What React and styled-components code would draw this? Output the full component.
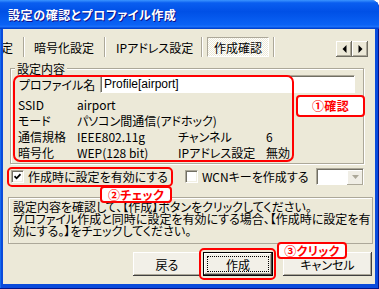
import React from "react";
import styled, { createGlobalStyle } from "styled-components";

const RED = "#FF0000";
const FACE = "#ECE9D8";

const GlobalStyle = createGlobalStyle`
  html, body { margin: 0; padding: 0; background: #ffffff; }
  body {
    font-family: "Noto Sans CJK JP", "Liberation Sans", sans-serif;
    font-size: 12px;
    color: #000;
    font-feature-settings: "palt";
  }
  *, *::before, *::after { box-sizing: border-box; }
`;

const Window = styled.div`
  width: 379px;
  height: 289px;
  display: flex;
  flex-direction: column;
  overflow: hidden;
  border-top-right-radius: 8px;
  background: #0A4BDB;
  box-shadow: inset -1px -1px #00138c, inset 1px 0 #166aee;
`;

const TitleBar = styled.div`
  height: 29px;
  flex: none;
  display: flex;
  align-items: center;
  padding-left: 8px;
  background: linear-gradient(180deg, #3b95ff 0%, #0a5ef0 10%, #0050e6 40%, #0a62f5 85%, #1a6ffa 92%, #0046d6 97%, #003dc8 100%);
  color: #fff;
  font-weight: 700;
  font-size: 12px;
  letter-spacing: 0.6px;
  text-shadow: 1px 1px #0f1089;
  white-space: nowrap;
`;

const Client = styled.div`
  position: relative;
  flex: 1;
  margin: 0 4px 5px 3px;
  background: ${FACE};
  display: flex;
  flex-direction: column;
`;

/* ---------- toolbar of pages ---------- */
const Toolbar = styled.div`
  display: flex;
  align-items: stretch;
  height: 20px;
  margin: 8px 7px 0 0;
  white-space: nowrap;
`;

const CutLabel = styled.span`
  width: 10px;
  overflow: hidden;
  display: flex;
  justify-content: flex-end;
  align-items: center;
`;

const Separator = styled.span`
  width: 2px;
  flex: none;
  border-left: 1px solid #aca899;
  border-right: 1px solid #fff;
  margin-left: ${(p) => p.$ml || 0}px;
`;

const Tab = styled.span`
  display: flex;
  align-items: center;
  width: ${(p) => p.$w}px;
  padding-left: ${(p) => p.$pl}px;
`;

const ActiveTab = styled.span`
  display: flex;
  align-items: center;
  margin: 0 4px 0 4px;
  padding: 0 6px;
  border: 1px solid;
  border-color: #aca899 #fff #fff #aca899;
  background: repeating-conic-gradient(#ffffff 0% 25%, ${FACE} 0% 50%) 0 0 / 2px 2px;
`;

const ScrollButtons = styled.div`
  margin-left: auto;
  display: flex;
  align-self: flex-end;
`;

const ScrollButton = styled.span`
  width: 16px;
  height: 16px;
  display: flex;
  align-items: center;
  justify-content: center;
  background: ${FACE};
  box-shadow: inset -1px -1px #716f64, inset 1px 1px #fff, inset -2px -2px #aca899;
`;

/* ---------- group box ---------- */
const Group = styled.fieldset`
  margin: 5px 0 0 7px;
  width: 354px;
  padding: 0 5px 2px 5px;
  border: 1px solid #aca899;
  box-shadow: inset 1px 1px #fff, 1px 1px #fff;
  min-width: 0;
`;

const Legend = styled.legend`
  padding: 0 2px;
  margin-left: -1px;
  line-height: 13px;
  background: ${FACE};
`;

const ProfileRow = styled.div`
  display: flex;
  align-items: center;
  height: 18px;
`;

const ProfileLabel = styled.span`
  width: 84px;
  padding-left: 3px;
  white-space: nowrap;
`;

const TextField = styled.div`
  width: 255px;
  height: 18px;
  display: flex;
  align-items: center;
  padding-left: 3px;
  background: #fff;
  border: 1px solid;
  border-color: #aca899 #fff #fff #aca899;
  box-shadow: inset 1px 1px #716f64;
  font-family: "Liberation Sans", "Noto Sans CJK JP", sans-serif;
`;

const InfoGrid = styled.div`
  display: grid;
  grid-template-columns: 59px 101px 88px auto;
  grid-template-rows: 16px 16px 16px 16px;
  align-items: center;
  margin-top: 4px;
  padding-left: 2px;
  line-height: 14px;
  white-space: nowrap;
`;

const Value = styled.span`
  grid-column: ${(p) => (p.$span ? "2 / span 3" : "auto")};
`;

/* ---------- check row ---------- */
const CheckRow = styled.div`
  display: flex;
  align-items: center;
  height: 20px;
  margin-top: 2px;
  padding-left: 8px;
  white-space: nowrap;
`;

const CheckItem = styled.label`
  display: flex;
  align-items: center;
  gap: 4px;
  margin-left: ${(p) => p.$ml || 0}px;
`;

const CheckBox = styled.span`
  width: 13px;
  height: 13px;
  flex: none;
  background: #fff;
  border: 1px solid;
  border-color: #aca899 #fff #fff #aca899;
  box-shadow: inset 1px 1px #716f64, inset -1px -1px #f1efe2;
  display: flex;
  align-items: center;
  justify-content: center;
`;

const Combo = styled.div`
  margin-left: 8px;
  width: 48px;
  height: 17px;
  display: flex;
  justify-content: flex-end;
  background: #fff;
  border: 1px solid;
  border-color: #aca899 #fff #fff #aca899;
  box-shadow: inset 1px 1px #716f64;
  padding: 1px 0 0 1px;
`;

const ComboButton = styled.span`
  width: 16px;
  height: 15px;
  display: flex;
  align-items: center;
  justify-content: center;
  background: #f0eee6;
  box-shadow: inset -1px -1px #aca899, inset 1px 1px #fff;
`;

/* ---------- description ---------- */
const Description = styled.p`
  margin: 11px 0 0 5px;
  width: 365px;
  height: 47px;
  padding: 3px 4px 0 4px;
  border: 1px solid #aca899;
  box-shadow: inset 1px 1px #fff;
  line-height: 12px;
  white-space: nowrap;
  overflow: hidden;
`;

/* ---------- buttons ---------- */
const ButtonRow = styled.div`
  display: flex;
  align-items: center;
  justify-content: flex-end;
  margin-top: 8px;
  padding-right: 3px;
  height: 24px;
`;

const Button = styled.button`
  font: inherit;
  width: ${(p) => p.$w}px;
  height: 24px;
  margin-left: ${(p) => p.$ml || 0}px;
  padding: 3px;
  color: #000;
  background: #f2f0e8;
  border: ${(p) => (p.$default ? "1px solid #000" : "none")};
  box-shadow: inset -1px -1px #404040, inset 1px 1px #fff, inset -2px -2px #aca899;
  display: flex;
`;

const FocusRing = styled.span`
  flex: 1;
  display: flex;
  align-items: center;
  justify-content: center;
  border: ${(p) => (p.$on ? "1px dotted #000" : "1px solid transparent")};
`;

/* ---------- annotations ---------- */
const Highlight = styled.div`
  position: absolute;
  left: ${(p) => p.$x}px;
  top: ${(p) => p.$y}px;
  width: ${(p) => p.$w}px;
  height: ${(p) => p.$h}px;
  border: 2px solid ${RED};
  border-radius: ${(p) => p.$r || 7}px;
  pointer-events: none;
`;

const Callout = styled.div`
  position: absolute;
  left: ${(p) => p.$x}px;
  top: ${(p) => p.$y}px;
  width: ${(p) => p.$w}px;
  height: ${(p) => p.$h}px;
  border: 2px solid ${RED};
  border-radius: 4px;
  background: #fff;
  color: ${RED};
  font-weight: 700;
  font-size: 12px;
  line-height: 12px;
  display: flex;
  align-items: center;
  justify-content: center;
  white-space: nowrap;
  letter-spacing: 0.3px;
`;

const Check = () => (
  <svg width="7" height="7" viewBox="0 0 7 7">
    <path d="M0.5 3.2 L2.6 5.3 L6.5 1.2" fill="none" stroke="#000" strokeWidth="1.8" />
  </svg>
);

const Triangle = ({ dir, color = "#000" }) => (
  <svg width="5" height="8" viewBox="0 0 5 8">
    {dir === "left" ? (
      <path d="M4.5 0 L0.5 4 L4.5 8 Z" fill={color} />
    ) : (
      <path d="M0.5 0 L4.5 4 L0.5 8 Z" fill={color} />
    )}
  </svg>
);

const DownArrow = () => (
  <svg width="7" height="4" viewBox="0 0 7 4">
    <path d="M0 0 L7 0 L3.5 4 Z" fill="#aca899" />
  </svg>
);

export default function App() {
  return (
    <>
      <GlobalStyle />
      <Window>
        <TitleBar>設定の確認とプロファイル作成</TitleBar>
        <Client>
          <Toolbar>
            <CutLabel>定</CutLabel>
            <Separator $ml={10} />
            <Tab $w={79} $pl={9}>暗号化設定</Tab>
            <Separator />
            <Tab $w={95} $pl={10}>IPアドレス設定</Tab>
            <Separator />
            <ActiveTab>作成確認</ActiveTab>
            <Separator />
            <ScrollButtons>
              <ScrollButton><Triangle dir="left" /></ScrollButton>
              <ScrollButton><Triangle dir="right" /></ScrollButton>
            </ScrollButtons>
          </Toolbar>

          <Group>
            <Legend>設定内容</Legend>
            <ProfileRow>
              <ProfileLabel>プロファイル名</ProfileLabel>
              <TextField>Profile[airport]</TextField>
            </ProfileRow>
            <InfoGrid>
              <span>SSID</span>
              <Value $span>airport</Value>
              <span>モード</span>
              <Value $span>パソコン間通信(アドホック)</Value>
              <span>通信規格</span>
              <Value>IEEE802.11g</Value>
              <span>チャンネル</span>
              <Value>6</Value>
              <span>暗号化</span>
              <Value>WEP(128 bit)</Value>
              <span>IPアドレス設定</span>
              <Value>無効</Value>
            </InfoGrid>
          </Group>

          <CheckRow>
            <CheckItem>
              <CheckBox><Check /></CheckBox>
              作成時に設定を有効にする
            </CheckItem>
            <CheckItem $ml={17}>
              <CheckBox />
              WCNキーを作成する
            </CheckItem>
            <Combo>
              <ComboButton><DownArrow /></ComboButton>
            </Combo>
          </CheckRow>

          <Description>
            設定内容を確認して、【作成】ボタンをクリックしてください。
            <br />
            プロファイル作成と同時に設定を有効にする場合、【作成時に設定を有
            <br />
            効にする。】をチェックしてください。
          </Description>

          <ButtonRow>
            <Button $w={68}><FocusRing>戻る</FocusRing></Button>
            <Button $w={70} $ml={2} $default><FocusRing $on>作成</FocusRing></Button>
            <Button $w={89} $ml={10}><FocusRing>キャンセル</FocusRing></Button>
          </ButtonRow>

          <Highlight $x={10} $y={46} $w={281} $h={87} />
          <Callout $x={293} $y={66} $w={69} $h={22}>①確認</Callout>
          <Highlight $x={4} $y={138} $w={166} $h={20} $r={5} />
          <Callout $x={97} $y={157} $w={72} $h={17}>②チェック</Callout>
          <Highlight $x={196} $y={219} $w={77} $h={32} $r={5} />
          <Callout $x={274} $y={213} $w={70} $h={17}>③クリック</Callout>
        </Client>
      </Window>
    </>
  );
}
